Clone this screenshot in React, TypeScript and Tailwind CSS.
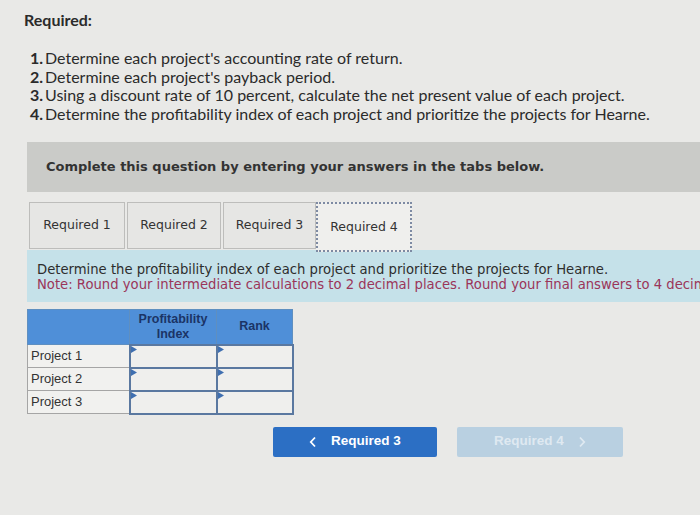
import React from "react";

const Tri = () => (
  <svg width="6" height="7" viewBox="0 0 6 7" className="absolute left-0 top-0">
    <polygon points="0,0 6,3.5 0,7" fill="#3f6fb0" />
  </svg>
);

const Chevron = ({ dir, color }: { dir: "l" | "r"; color: string }) => (
  <svg width="8" height="12" viewBox="0 0 8 12">
    <polyline
      points={dir === "l" ? "6,1.5 1.8,6 6,10.5" : "2,1.5 6.2,6 2,10.5"}
      fill="none"
      stroke={color}
      strokeWidth="1.8"
    />
  </svg>
);

export default function App() {
  const items = [
    "Determine each project's accounting rate of return.",
    "Determine each project's payback period.",
    "Using a discount rate of 10 percent, calculate the net present value of each project.",
    "Determine the profitability index of each project and prioritize the projects for Hearne.",
  ];
  return (
    <div className="w-[700px] h-[515px] overflow-hidden bg-[#e9e9e7] relative">
      <div className="pl-[24px] pt-[10px] font-['Lato',sans-serif] text-[#2b2b2b]">
        <div className="text-[16px] font-bold leading-[20px]">Required:</div>
        <ol className="mt-[19px] pl-[6px] text-[16px] leading-[18.5px]">
          {items.map((t, i) => (
            <li key={i} className="flex">
              <span className="font-bold w-[15px]">{i + 1}.</span>
              <span>{t}</span>
            </li>
          ))}
        </ol>
      </div>

      <div className="ml-[27px] mt-[19px] h-[50px] bg-[#cacbc8] flex items-center pl-[19px] font-['DejaVu_Sans',sans-serif] font-bold text-[13px] text-[#333]">
        Complete this question by entering your answers in the tabs below.
      </div>

      <div className="ml-[29px] mt-[10px] flex items-start font-['DejaVu_Sans',sans-serif] text-[12.5px] text-[#333]">
        <div className="w-[96px] h-[47px] border border-[#bdbdbb] bg-[#e6e6e4] flex items-center justify-center">Required 1</div>
        <div className="w-[94px] h-[47px] ml-[2px] border border-[#bdbdbb] bg-[#e6e6e4] flex items-center justify-center">Required 2</div>
        <div className="w-[93px] h-[47px] ml-[2px] border border-[#bdbdbb] bg-[#e6e6e4] flex items-center justify-center">Required 3</div>
        <div className="w-[96px] h-[50px] border-2 border-dotted border-[#7d8aa3] bg-[#efefed] flex items-center justify-center">Required 4</div>
      </div>

      <div className="ml-[27px] mt-[-2px] h-[52px] bg-[#c5e1e9] pl-[10px] pt-[12px] font-['DejaVu_Sans',sans-serif] text-[13.2px] leading-[15px] whitespace-nowrap overflow-hidden">
        <div className="text-[#2d2d2d]">Determine the profitability index of each project and prioritize the projects for Hearne.</div>
        <div className="text-[#9b3559]">Note: Round your intermediate calculations to 2 decimal places. Round your final answers to 4 decimal places.</div>
      </div>

      <table className="ml-[27px] mt-[7px] border-collapse font-['Liberation_Sans',sans-serif] text-[13px]">
        <thead>
          <tr className="h-[35px] bg-[#4f8fd8]">
            <th className="w-[102px] border border-[#5f8fc0]"></th>
            <th className="w-[87px] border border-[#5f8fc0] text-[#1b3466] font-bold text-[12.5px] leading-[15px]">
              Profitability<br />Index
            </th>
            <th className="w-[76px] border border-[#5f8fc0] text-[#1b3466] font-bold text-[12.5px]">Rank</th>
          </tr>
        </thead>
        <tbody>
          {["Project 1", "Project 2", "Project 3"].map((p) => (
            <tr key={p} className="h-[23px]">
              <td className="border border-[#a5a5a5] bg-[#f1f1ef] pl-[3px] text-[#333] leading-[20px]">{p}</td>
              <td className="border-2 border-[#5a78a0] bg-[#efefed] relative p-0"><Tri /></td>
              <td className="border-2 border-[#5a78a0] bg-[#efefed] relative p-0"><Tri /></td>
            </tr>
          ))}
        </tbody>
      </table>

      <div className="ml-[273px] mt-[12px] flex gap-[20px] font-['Liberation_Sans',sans-serif] font-bold text-[13.5px]">
        <div className="w-[164px] h-[30px] bg-[#2c6fc4] rounded-[2px] flex items-center justify-center gap-[14px] text-white">
          <Chevron dir="l" color="#ffffff" />
          <span>Required 3</span>
        </div>
        <div className="w-[166px] h-[30px] bg-[#b9d0e1] rounded-[2px] flex items-center justify-center gap-[14px] text-[#dfe9f1]">
          <span>Required 4</span>
          <Chevron dir="r" color="#dfe9f1" />
        </div>
      </div>
    </div>
  );
}
